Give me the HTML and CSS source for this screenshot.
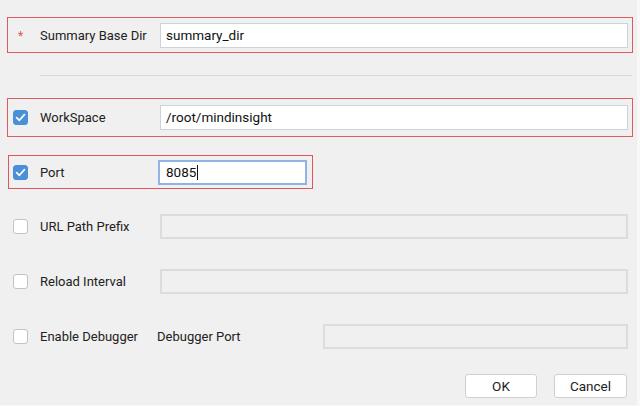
FILE: index.html
```html
<!DOCTYPE html>
<html>
<head>
<meta charset="utf-8">
<link rel="stylesheet" href="styles.css">
</head>
<body>
<div class="dialog">
  <div class="row row-first marked">
    <span class="lead"><span class="star">*</span></span>
    <span class="label">Summary Base Dir</span>
    <div class="field">summary_dir</div>
  </div>
  <div class="sep"></div>
  <div class="row row-tall marked">
    <span class="lead"><span class="cb checked"><svg viewBox="0 0 15 15" width="15" height="15"><path d="M3.6 7.6 L6.4 10.3 L11.4 4.6" fill="none" stroke="#fff" stroke-width="1.7" stroke-linecap="round" stroke-linejoin="round"/></svg></span></span>
    <span class="label">WorkSpace</span>
    <div class="field">/root/mindinsight</div>
  </div>
  <div class="port-wrap">
    <div class="row port-row">
      <span class="lead"><span class="cb checked"><svg viewBox="0 0 15 15" width="15" height="15"><path d="M3.6 7.6 L6.4 10.3 L11.4 4.6" fill="none" stroke="#fff" stroke-width="1.7" stroke-linecap="round" stroke-linejoin="round"/></svg></span></span>
      <span class="label label-port">Port</span>
      <div class="field focus">8085<span class="caret"></span></div>
    </div>
  </div>
  <div class="row">
    <span class="lead"><span class="cb"></span></span>
    <span class="label">URL Path Prefix</span>
    <div class="field disabled"></div>
  </div>
  <div class="row">
    <span class="lead"><span class="cb"></span></span>
    <span class="label">Reload Interval</span>
    <div class="field disabled"></div>
  </div>
  <div class="row">
    <span class="lead"><span class="cb"></span></span>
    <span class="label label-debug">Enable Debugger</span>
    <span class="label label-dport">Debugger Port</span>
    <div class="field disabled"></div>
  </div>
  <div class="buttons">
    <button class="btn">OK</button>
    <button class="btn">Cancel</button>
  </div>
</div>
</body>
</html>
```
FILE: styles.css
```css
html, body {
  margin: 0;
  padding: 0;
  background: #f8f8f8;
}
body {
  font-family: Roboto, "Noto Sans", sans-serif;
  font-size: 13px;
  color: #222;
}
.dialog {
  width: 637px;
  height: 405px;
  background: #f0f0f0;
  display: flex;
  flex-direction: column;
  padding-top: 17px;
  box-sizing: border-box;
}
.row {
  display: flex;
  align-items: center;
  height: 37px;
  box-sizing: border-box;
  margin-left: 7px;
  width: 626px;
  border: 1px solid transparent;
  margin-bottom: 18px;
}
.row-first {
  height: 36px;
  margin-bottom: 0;
}
.row-tall {
  height: 39px;
  margin-bottom: 16px;
}
.marked {
  border: 1px solid #dc5c62;
}
.port-wrap {
  display: flex;
  margin-top: 1px;
}
.row.port-row {
  width: 307px;
  height: 36px;
  border: 1px solid rgba(0,0,0,0);
  box-shadow: inset 0 0 0 1px #e2545c;
  margin-bottom: 18px;
}
.lead {
  width: 15px;
  margin-left: 5px;
  margin-right: 12px;
  display: flex;
  justify-content: center;
}
.star {
  color: #e0505a;
  font-size: 12px;
  margin-top: 2px;
}
.label {
  width: 120px;
  flex: none;
  white-space: nowrap;
}
.label-port {
  width: 118px;
}
.label-debug {
  width: 117px;
}
.label-dport {
  width: 166px;
}
.field {
  flex: 1;
  height: 25px;
  box-sizing: border-box;
  background: #fff;
  border: 1px solid #ccd3dd;
  margin-right: 4px;
  padding: 0 5px;
  line-height: 23px;
  font-size: 13.5px;
  color: #111;
}
.field.focus {
  border: 2px solid #8fb4e3;
  padding: 0 5px 0 6px;
  line-height: 21px;
  margin-right: 6px;
  display: flex;
  align-items: center;
}
.caret {
  display: inline-block;
  width: 1px;
  height: 15px;
  background: #111;
  margin-left: 1px;
}
.field.disabled {
  background: #f0f0f0;
  border: 2px solid #dcdcdc;
}
.cb {
  width: 15px;
  height: 15px;
  box-sizing: border-box;
  border: 1px solid #c3c3c3;
  border-radius: 3px;
  background: #fff;
  display: block;
}
.cb.checked {
  background: #4a8fda;
  border-color: #4a8fda;
  position: relative;
}
.cb.checked svg {
  position: absolute;
  left: -1px;
  top: -1px;
}
.sep {
  height: 1px;
  background: #d8d8d8;
  margin: 22px 5px 22px 40px;
}
.buttons {
  display: flex;
  justify-content: flex-end;
  gap: 17px;
  padding-right: 10px;
  margin-top: 1px;
}
.btn {
  font-family: inherit;
  font-size: 13.5px;
  color: #222;
  width: 72px;
  height: 24px;
  background: #fff;
  border: 1px solid #d0d0d0;
  border-radius: 3px;
  padding: 0;
}
.btn + .btn {
  width: 73px;
}
```
